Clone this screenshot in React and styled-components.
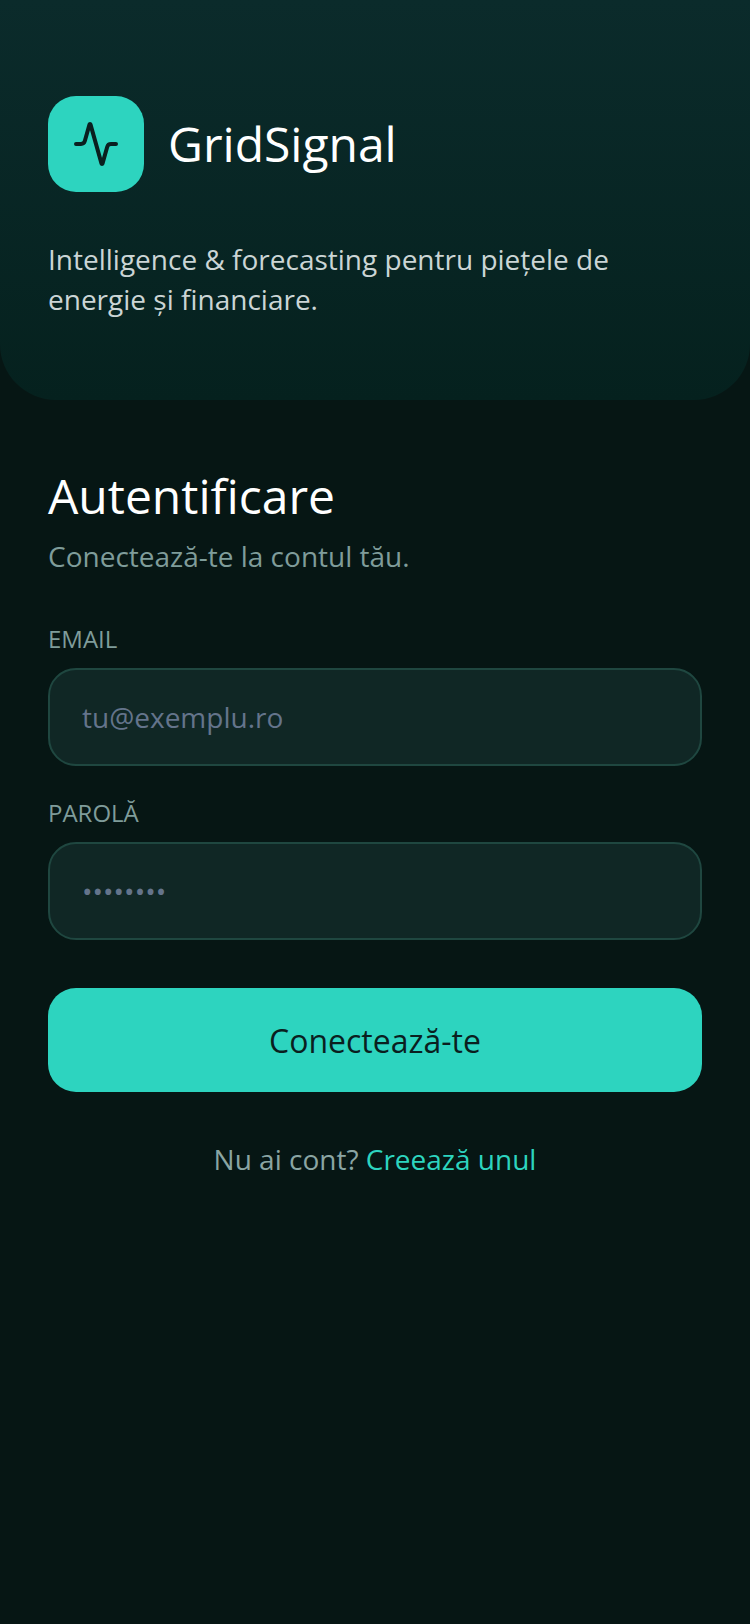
import React from "react";
import styled, { createGlobalStyle } from "styled-components";
import { Activity } from "lucide-react";

const GlobalStyle = createGlobalStyle`
  * {
    box-sizing: border-box;
  }
  body {
    margin: 0;
    background-color: #061614;
    font-family: "Open Sans", sans-serif;
  }
`;

const Screen = styled.div`
  min-height: 1624px;
  background-color: #061614;
`;

const Hero = styled.header`
  height: 400px;
  padding: 96px 48px 0;
  background: linear-gradient(180deg, #0b2b2b 0%, #05211e 100%);
  border-radius: 0 0 56px 56px;
`;

const Brand = styled.div`
  display: flex;
  align-items: center;
  gap: 24px;
`;

const LogoBox = styled.div`
  width: 96px;
  height: 96px;
  border-radius: 28px;
  background-color: #2dd4bf;
  color: #0a1f1f;
  display: flex;
  align-items: center;
  justify-content: center;
`;

const BrandName = styled.h1`
  margin: -1px 0 1px;
  font-size: 48px;
  font-weight: 400;
  color: #fff;
`;

const Tagline = styled.p`
  margin: 47px 0 0;
  font-size: 28px;
  line-height: 40px;
  color: #cbd5d5;
`;

const Main = styled.main`
  padding: 64px 48px 0;
`;

const Title = styled.h2`
  margin: 0;
  font-size: 48px;
  line-height: 64px;
  font-weight: 400;
  color: #fff;
`;

const Subtitle = styled.p`
  margin: 8px 0 0;
  font-size: 28px;
  line-height: 40px;
  color: #7f9c9a;
`;

const Form = styled.form`
  margin-top: 47px;
  display: flex;
  flex-direction: column;
`;

const Field = styled.div`
  display: flex;
  flex-direction: column;
  gap: 13px;
  margin-bottom: 31px;
`;

const Label = styled.label`
  font-size: 24px;
  line-height: 32px;
  color: #7f9c9a;
`;

const Input = styled.input`
  height: 98px;
  padding: 0 32px;
  border: 2px solid #1f4740;
  border-radius: 28px;
  background-color: #102725;
  font-family: inherit;
  font-size: 28px;
  color: #fff;
  outline: none;

  &::placeholder {
    color: #64748b;
    opacity: 1;
  }
`;

const SubmitButton = styled.button`
  height: 104px;
  margin-top: 17px;
  border: none;
  border-radius: 28px;
  background-color: #2dd4bf;
  font-family: inherit;
  font-size: 32px;
  color: #0a1f1f;
`;

const Footer = styled.p`
  margin: 47px 0 0;
  text-align: center;
  font-size: 28px;
  line-height: 40px;
  color: #8aa5a3;
`;

const FooterLink = styled.a`
  color: #2dd4bf;
  text-decoration: none;
`;

export default function App() {
  return (
    <Screen>
      <GlobalStyle />
      <Hero>
        <Brand>
          <LogoBox>
            <Activity size={48} strokeWidth={2} />
          </LogoBox>
          <BrandName>GridSignal</BrandName>
        </Brand>
        <Tagline>Intelligence &amp; forecasting pentru piețele de energie și financiare.</Tagline>
      </Hero>
      <Main>
        <Title>Autentificare</Title>
        <Subtitle>Conectează-te la contul tău.</Subtitle>
        <Form>
          <Field>
            <Label>EMAIL</Label>
            <Input type="email" placeholder="tu@exemplu.ro" />
          </Field>
          <Field>
            <Label>PAROLĂ</Label>
            <Input type="password" placeholder="••••••••" />
          </Field>
          <SubmitButton type="button">Conectează-te</SubmitButton>
        </Form>
        <Footer>
          Nu ai cont? <FooterLink href="#">Creează unul</FooterLink>
        </Footer>
      </Main>
    </Screen>
  );
}
